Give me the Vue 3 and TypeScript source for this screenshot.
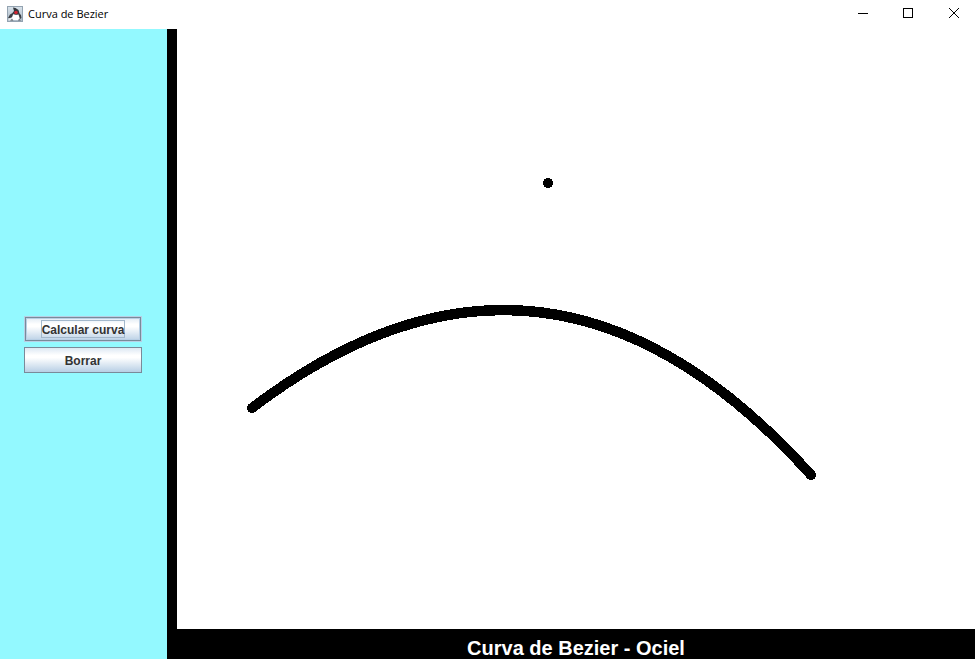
<script setup lang="ts">
import { computed, ref } from 'vue'

interface Point {
  x: number
  y: number
}

const radius = 5
const points = ref<Point[]>([
  { x: 75, y: 379 },
  { x: 371, y: 154 },
  { x: 634, y: 446 },
])
const showCurve = ref(true)

const curvePath = computed(() => {
  if (!showCurve.value || points.value.length < 3) return ''
  const [start, control, end] = points.value
  return `M${start.x} ${start.y} Q${control.x} ${control.y} ${end.x} ${end.y}`
})

function calculate() {
  showCurve.value = points.value.length === 3
}

function clear() {
  points.value = []
  showCurve.value = false
}

function addPoint(event: MouseEvent) {
  if (points.value.length < 3) {
    points.value.push({ x: event.offsetX, y: event.offsetY })
  }
}
</script>

<template>
  <div class="window">
    <header class="titlebar">
      <svg class="app-icon" viewBox="0 0 16 16" aria-hidden="true">
        <defs>
          <linearGradient id="icon-bg" x1="0" y1="0" x2="0" y2="1">
            <stop offset="0" stop-color="#d9e3eb" />
            <stop offset="1" stop-color="#aab8c5" />
          </linearGradient>
        </defs>
        <rect x="0.5" y="0.5" width="15" height="15" fill="url(#icon-bg)" stroke="#94a3b1" />
        <path d="M6 1.5 8.5 2l3 2 1 3.5-1.5 1.5-4-.5L5.5 7 7 5Z" fill="#33373d" />
        <path d="M6.5 6.5 3 8.5 1 12l2 .5L6 10.500Zm5 0 2.500 2.500.5 3-1.500 1-2-3Z" fill="#3a3f45" />
        <path d="M6 8.500c2 .5 4 .5 5.500 0l1 3-.5 2.500H5.500l-.5-2.500Z" fill="#fff" />
        <path d="m1.500 12.500 3-1 1.500 2-2 1h-2.500Z" fill="#e5e9ed" />
        <path d="M3 14.500 5 13l1.500 1.500Zm8 0 1-1.500 2 1.500Z" fill="#50565c" />
        <circle cx="9" cy="6.5" r="1.800" fill="#d22431" />
      </svg>
      <span class="title">Curva de Bezier</span>
      <div class="controls">
        <button type="button" class="control" aria-label="Minimizar">
          <svg viewBox="0 0 11 11" shape-rendering="crispEdges"><path d="M0 5.5h10" /></svg>
        </button>
        <button type="button" class="control" aria-label="Maximizar">
          <svg viewBox="0 0 11 11" shape-rendering="crispEdges"><path d="M.5.5h9v9h-9Z" /></svg>
        </button>
        <button type="button" class="control" aria-label="Cerrar">
          <svg viewBox="0 0 11 11"><path d="m1 0 10 10m0-10-10 10" /></svg>
        </button>
      </div>
    </header>
    <main class="content">
      <aside class="sidebar">
        <button type="button" class="action selected" @click="calculate"><span>Calcular curva</span></button>
        <button type="button" class="action" @click="clear"><span>Borrar</span></button>
      </aside>
      <section class="workspace">
        <svg class="canvas" shape-rendering="crispEdges" @click="addPoint">
          <path class="curve" :d="curvePath" :stroke-width="radius * 2" />
          <circle v-for="(point, i) in points" :key="i" :cx="point.x" :cy="point.y" :r="radius" />
        </svg>
        <footer class="caption">Curva de Bezier - Ociel</footer>
      </section>
    </main>
  </div>
</template>

<style>
body {
  margin: 0;
}
</style>

<style scoped>
.window {
  display: flex;
  flex-direction: column;
  height: 100vh;
  background: #fff;
}

.titlebar {
  display: flex;
  align-items: center;
  flex: 0 0 29px;
  box-sizing: border-box;
  padding: 0 0 2px 7px;
  font: 11px/16px "Open Sans", sans-serif;
  color: #000;
}

.app-icon {
  width: 16px;
  height: 16px;
  margin-right: 5px;
}

.controls {
  display: flex;
  margin-left: auto;
}

.control {
  display: grid;
  place-items: center;
  box-sizing: border-box;
  width: 45px;
  height: 27px;
  padding: 0 0 0 2px;
  border: 0;
  background: transparent;
}

.control svg {
  width: 11px;
  height: 11px;
  fill: none;
  stroke: #000;
}

.content {
  display: flex;
  flex: 1;
  min-height: 0;
}

.sidebar {
  display: flex;
  flex-direction: column;
  align-items: center;
  justify-content: center;
  gap: 5px;
  flex: 0 0 167px;
  box-sizing: border-box;
  padding-right: 1px;
  background: #93f9ff;
}

.action {
  width: 118px;
  height: 26px;
  padding: 0;
  border: 1px solid #7a8a99;
  background: linear-gradient(#dde8f3, #fff 30%, #fff 40%, #b8cfe5);
  font: bold 12px/16px "Liberation Sans", Arial, sans-serif;
  color: #333;
}

.action span {
  display: inline-block;
  box-sizing: border-box;
  height: 18px;
  padding-top: 1px;
  border: 1px solid transparent;
}

.selected {
  border-color: #b8cfe5;
  box-shadow: inset 0 0 0 1px #7a8a99, inset 0 0 0 2px #b8cfe5;
}

.selected span {
  border-color: #a3b8cc;
}

.workspace {
  display: flex;
  flex-direction: column;
  flex: 1;
  min-width: 0;
  border-left: 10px solid #000;
}

.canvas {
  display: block;
  flex: 1;
  width: 100%;
  min-height: 0;
}

.curve {
  fill: none;
  stroke: #000;
  stroke-linecap: round;
}

.caption {
  box-sizing: border-box;
  height: 30px;
  padding-top: 8px;
  background: #000;
  color: #fff;
  font: bold 20px/22px "Liberation Sans", Arial, sans-serif;
  text-align: center;
}
</style>
